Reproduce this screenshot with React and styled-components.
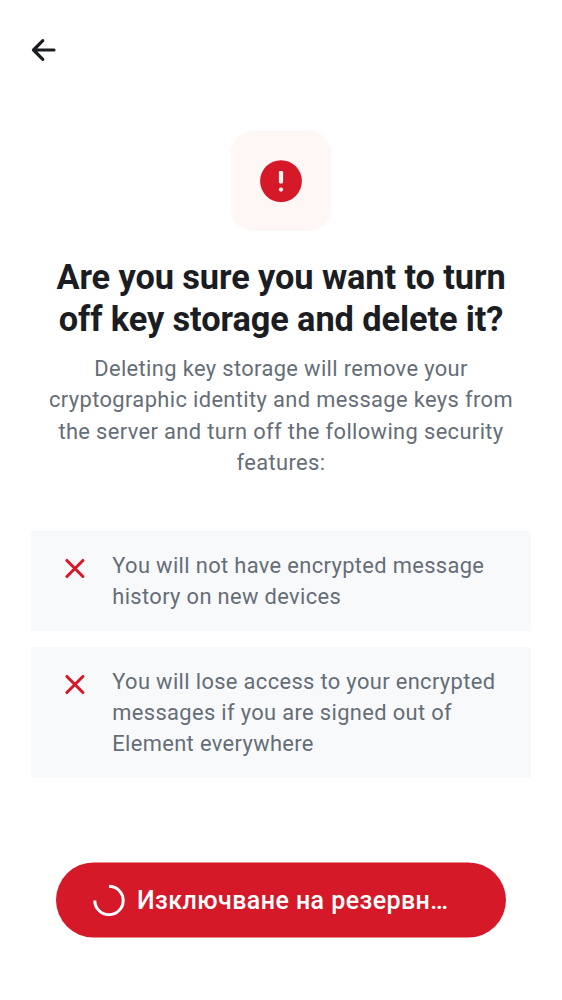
import React from 'react';
import styled, { createGlobalStyle } from 'styled-components';

const Global = createGlobalStyle`
  * { box-sizing: border-box; }
  body { margin: 0; background: #fff; font-family: Roboto, "Noto Sans", sans-serif; }
`;

const Screen = styled.main`
  display: flex;
  flex-direction: column;
  height: 1000px;
  padding: 37px 31px 62px;
`;

const BackButton = styled.button`
  display: flex;
  width: 25px;
  height: 25px;
  padding: 0;
  border: 0;
  background: none;
`;

const Header = styled.header`
  display: flex;
  flex-direction: column;
  align-items: center;
  margin-top: 69px;
  text-align: center;
`;

const IconTile = styled.div`
  display: grid;
  place-items: center;
  width: 100px;
  height: 100px;
  border-radius: 22px;
  background: #fff7f6;
`;

const Title = styled.h1`
  margin: 25px 0 0;
  color: #1b1d22;
  font-size: 34.375px;
  font-weight: 700;
  line-height: 42px;
  letter-spacing: -0.1px;
  white-space: nowrap;
`;

const Description = styled.p`
  margin: 13px 0 0;
  color: #656d77;
  font-size: 21.875px;
  line-height: 31.25px;
  letter-spacing: 0.375px;
  white-space: nowrap;
`;

const List = styled.ul`
  display: flex;
  flex-direction: column;
  gap: 16px;
  margin: 53px 0 0;
  padding: 0;
  list-style: none;
`;

const Item = styled.li`
  display: flex;
  gap: 22.3px;
  padding: 18.8px 0 18.7px 28px;
  background: #f7f9fb;
  color: #656d77;
  font-size: 21.875px;
  line-height: 31.2px;
  letter-spacing: 0.36px;
  white-space: nowrap;
`;

const CrossIcon = styled.svg`
  width: 31px;
  height: 31px;
  margin-top: 2.6px;
  flex: none;
`;

const SubmitButton = styled.button`
  display: flex;
  align-items: center;
  gap: 12px;
  height: 75px;
  margin: auto 25px 0;
  padding: 0 37px;
  border: 0;
  border-radius: 38px;
  background: #d51928;
  color: #fff;
  font: 500 25px/31px Roboto, "Noto Sans", sans-serif;
  letter-spacing: 0.43px;
  white-space: nowrap;
  transform: translateY(-0.5px);
`;

const Lines = ({ items }) => items.map((line, i) => (
  <React.Fragment key={line}>{i > 0 && <br />}{line}</React.Fragment>
));

const LOSSES = [
  ['You will not have encrypted message', 'history on new devices'],
  ['You will lose access to your encrypted', 'messages if you are signed out of', 'Element everywhere'],
];

export default function App() {
  return (
    <Screen>
      <Global />
      <BackButton aria-label="Back">
        <svg width="25" height="25" viewBox="0 0 25 25" fill="none" stroke="#1b1d22" strokeWidth="3.2" strokeLinecap="round" strokeLinejoin="round">
          <path d="M23 13H3M11.8 3.7L2.5 13l9.3 9.3" />
        </svg>
      </BackButton>
      <Header>
        <IconTile>
          <svg width="42" height="42" viewBox="0 0 42 42">
            <circle cx="21" cy="21.1" r="20.9" fill="#d51928" />
            <rect x="18.9" y="10.9" width="4.2" height="12.5" rx="1.3" fill="#fff7f6" />
            <circle cx="21" cy="29.6" r="2.1" fill="#fff7f6" />
          </svg>
        </IconTile>
        <Title><Lines items={['Are you sure you want to turn', 'off key storage and delete it?']} /></Title>
        <Description>
          <Lines items={['Deleting key storage will remove your', 'cryptographic identity and message keys from', 'the server and turn off the following security', 'features:']} />
        </Description>
      </Header>
      <List>
        {LOSSES.map((lines) => (
          <Item key={lines[0]}>
            <CrossIcon viewBox="0 0 31 31" fill="none" stroke="#d51928" strokeWidth="3.1" strokeLinecap="round">
              <path d="M7.9 8.5l16 16M23.9 8.5l-16 16" />
            </CrossIcon>
            <span><Lines items={lines} /></span>
          </Item>
        ))}
      </List>
      <SubmitButton>
        <svg width="32" height="32" viewBox="0 0 32 32" fill="none" stroke="#fff" strokeWidth="3">
          <path d="M16 1.8A14.2 14.2 0 1 1 1.8 16" />
        </svg>
        <span>Изключване на резервн…</span>
      </SubmitButton>
    </Screen>
  );
}
